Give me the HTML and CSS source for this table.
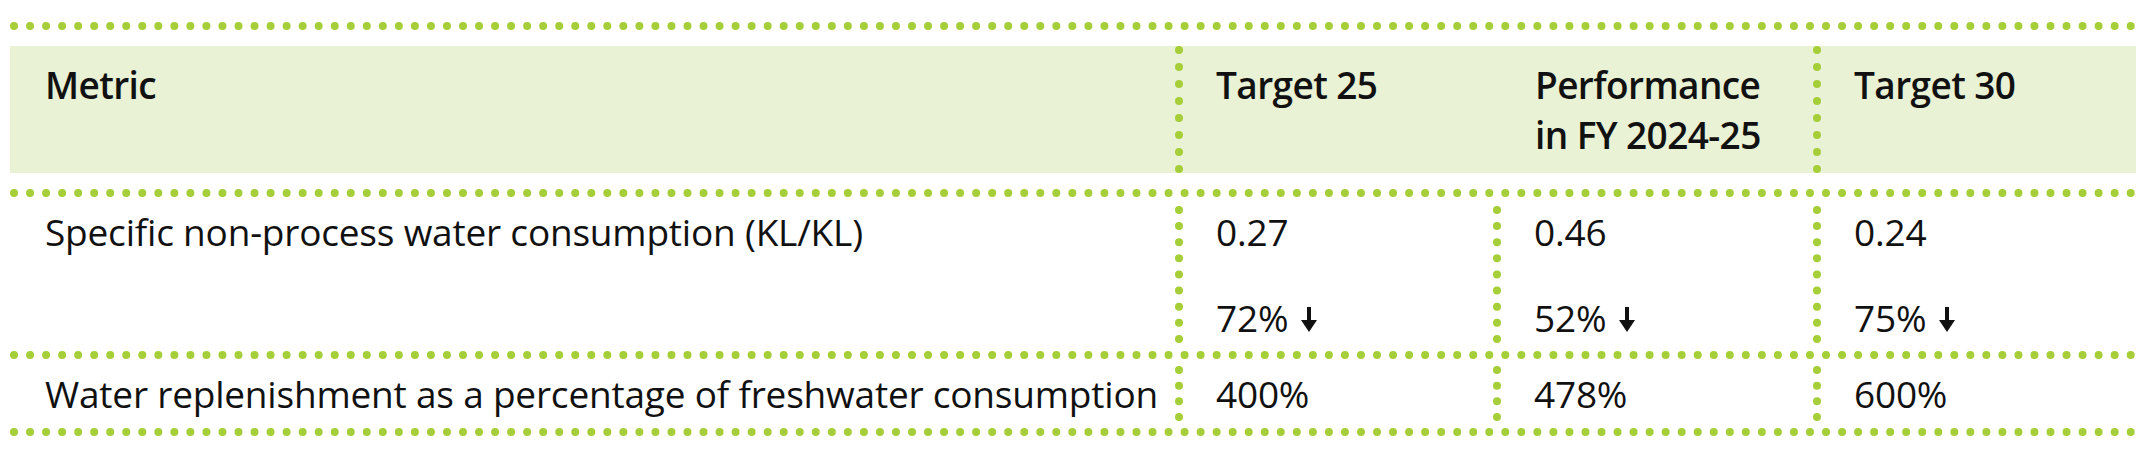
FILE: index.html
```html
<!DOCTYPE html>
<html lang="en">
<head>
<meta charset="utf-8">
<title>Water metrics</title>
<link rel="stylesheet" href="styles.css">
</head>
<body>
<div class="table">
  <div class="row head">
    <div class="cell c1">Metric</div>
    <div class="cell c2 dl">Target 25</div>
    <div class="cell c3">Performance<br>in FY 2024-25</div>
    <div class="cell c4 dl">Target 30</div>
  </div>
  <div class="row r1">
    <div class="cell c1">Specific non-process water consumption (KL/KL)</div>
    <div class="cell c2 dl stack"><span>0.27</span><span>72% <svg class="arrow" viewBox="0 0 16 25"><rect x="6" y="0" width="4" height="14"/><polygon points="0,13 16,13 8,25"/></svg></span></div>
    <div class="cell c3 dl stack"><span>0.46</span><span>52% <svg class="arrow" viewBox="0 0 16 25"><rect x="6" y="0" width="4" height="14"/><polygon points="0,13 16,13 8,25"/></svg></span></div>
    <div class="cell c4 dl stack"><span>0.24</span><span>75% <svg class="arrow" viewBox="0 0 16 25"><rect x="6" y="0" width="4" height="14"/><polygon points="0,13 16,13 8,25"/></svg></span></div>
  </div>
  <div class="row r2">
    <div class="cell c1">Water replenishment as a percentage of freshwater consumption</div>
    <div class="cell c2 dl">400%</div>
    <div class="cell c3 dl">478%</div>
    <div class="cell c4 dl">600%</div>
  </div>
</div>
</body>
</html>
```
FILE: styles.css
```css
html, body {
  margin: 0;
  padding: 0;
  background: #ffffff;
}
body {
  font-family: "Open Sans", "Noto Sans", sans-serif;
  color: #111111;
}
.table {
  margin: 22px 0 0 10px;
  width: 2126px;
  border-top: 8px dotted #a6ce39;
}
.row {
  display: grid;
  grid-template-columns: 1165px 318px 320px 323px;
  border-bottom: 8px dotted #a6ce39;
}
.head {
  padding: 16px 0;
}
.head .cell {
  background: #e9f2d5;
  height: 127px;
  box-sizing: border-box;
  font-size: 37px;
  font-weight: 600;
  letter-spacing: -0.6px;
  line-height: 50px;
  padding-top: 14px;
}
.r1 {
  padding: 9px 0 8px;
}
.r1 .cell {
  height: 137px;
  padding-top: 3.5px;
}
.r2 {
  padding: 7px 0 7px;
}
.r2 .cell {
  height: 55px;
  padding-top: 6px;
}
.r1 .cell, .r2 .cell {
  box-sizing: border-box;
  font-size: 37px;
  letter-spacing: -0.2px;
  line-height: 44px;
}
.cell.c1 {
  padding-left: 35px;
}
.cell.c2, .cell.c4 {
  padding-left: 41px;
}
.cell.c3 {
  padding-left: 42px;
}
.cell.dl {
  border-left: 8px dotted #a6ce39;
  padding-left: 33px;
}
.stack {
  display: flex;
  flex-direction: column;
  gap: 42px;
}
.arrow {
  display: inline-block;
  width: 16px;
  height: 25px;
  fill: #111111;
  margin-left: 3px;
  vertical-align: baseline;
}
```
